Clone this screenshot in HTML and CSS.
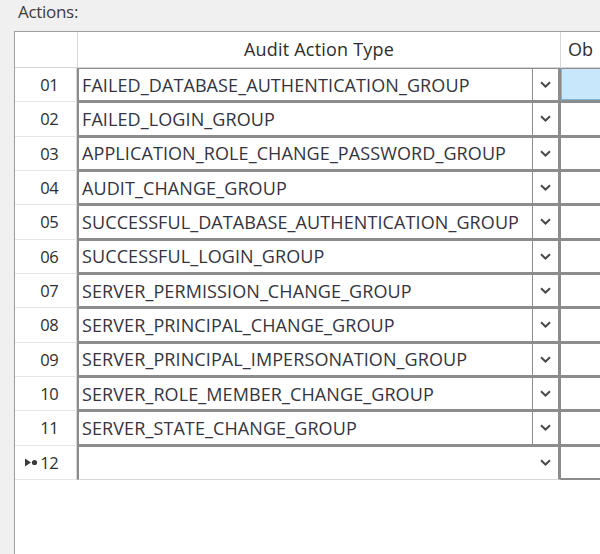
FILE: index.html
```html
<!DOCTYPE html>
<html>
<head>
<meta charset="utf-8">
<link rel="stylesheet" href="styles.css">
</head>
<body>
<div class="page">
  <div class="label">Actions:</div>
  <div class="grid">
    <div class="hdr">
      <div class="corner"></div>
      <div class="hcol">Audit Action Type</div>
      <div class="hob">Ob</div>
    </div>
    <div class="row first">
      <div class="rh">01</div>
      <div class="combo"><span class="txt">FAILED_DATABASE_AUTHENTICATION_GROUP</span><span class="arr"><svg width="11" height="7" viewBox="0 0 11 7"><path d="M1 1.2 L5.5 5.5 L10 1.2" fill="none" stroke="#4a4a4a" stroke-width="2"/></svg></span></div>
      <div class="cell sel"></div>
    </div>
    <div class="row">
      <div class="rh">02</div>
      <div class="combo"><span class="txt">FAILED_LOGIN_GROUP</span><span class="arr"><svg width="11" height="7" viewBox="0 0 11 7"><path d="M1 1.2 L5.5 5.5 L10 1.2" fill="none" stroke="#4a4a4a" stroke-width="2"/></svg></span></div>
      <div class="cell"></div>
    </div>
    <div class="row">
      <div class="rh">03</div>
      <div class="combo"><span class="txt">APPLICATION_ROLE_CHANGE_PASSWORD_GROUP</span><span class="arr"><svg width="11" height="7" viewBox="0 0 11 7"><path d="M1 1.2 L5.5 5.5 L10 1.2" fill="none" stroke="#4a4a4a" stroke-width="2"/></svg></span></div>
      <div class="cell"></div>
    </div>
    <div class="row">
      <div class="rh">04</div>
      <div class="combo"><span class="txt">AUDIT_CHANGE_GROUP</span><span class="arr"><svg width="11" height="7" viewBox="0 0 11 7"><path d="M1 1.2 L5.5 5.5 L10 1.2" fill="none" stroke="#4a4a4a" stroke-width="2"/></svg></span></div>
      <div class="cell"></div>
    </div>
    <div class="row">
      <div class="rh">05</div>
      <div class="combo"><span class="txt">SUCCESSFUL_DATABASE_AUTHENTICATION_GROUP</span><span class="arr"><svg width="11" height="7" viewBox="0 0 11 7"><path d="M1 1.2 L5.5 5.5 L10 1.2" fill="none" stroke="#4a4a4a" stroke-width="2"/></svg></span></div>
      <div class="cell"></div>
    </div>
    <div class="row">
      <div class="rh">06</div>
      <div class="combo"><span class="txt">SUCCESSFUL_LOGIN_GROUP</span><span class="arr"><svg width="11" height="7" viewBox="0 0 11 7"><path d="M1 1.2 L5.5 5.5 L10 1.2" fill="none" stroke="#4a4a4a" stroke-width="2"/></svg></span></div>
      <div class="cell"></div>
    </div>
    <div class="row">
      <div class="rh">07</div>
      <div class="combo"><span class="txt">SERVER_PERMISSION_CHANGE_GROUP</span><span class="arr"><svg width="11" height="7" viewBox="0 0 11 7"><path d="M1 1.2 L5.5 5.5 L10 1.2" fill="none" stroke="#4a4a4a" stroke-width="2"/></svg></span></div>
      <div class="cell"></div>
    </div>
    <div class="row">
      <div class="rh">08</div>
      <div class="combo"><span class="txt">SERVER_PRINCIPAL_CHANGE_GROUP</span><span class="arr"><svg width="11" height="7" viewBox="0 0 11 7"><path d="M1 1.2 L5.5 5.5 L10 1.2" fill="none" stroke="#4a4a4a" stroke-width="2"/></svg></span></div>
      <div class="cell"></div>
    </div>
    <div class="row">
      <div class="rh">09</div>
      <div class="combo"><span class="txt">SERVER_PRINCIPAL_IMPERSONATION_GROUP</span><span class="arr"><svg width="11" height="7" viewBox="0 0 11 7"><path d="M1 1.2 L5.5 5.5 L10 1.2" fill="none" stroke="#4a4a4a" stroke-width="2"/></svg></span></div>
      <div class="cell"></div>
    </div>
    <div class="row">
      <div class="rh">10</div>
      <div class="combo"><span class="txt">SERVER_ROLE_MEMBER_CHANGE_GROUP</span><span class="arr"><svg width="11" height="7" viewBox="0 0 11 7"><path d="M1 1.2 L5.5 5.5 L10 1.2" fill="none" stroke="#4a4a4a" stroke-width="2"/></svg></span></div>
      <div class="cell"></div>
    </div>
    <div class="row">
      <div class="rh">11</div>
      <div class="combo"><span class="txt">SERVER_STATE_CHANGE_GROUP</span><span class="arr"><svg width="11" height="7" viewBox="0 0 11 7"><path d="M1 1.2 L5.5 5.5 L10 1.2" fill="none" stroke="#4a4a4a" stroke-width="2"/></svg></span></div>
      <div class="cell"></div>
    </div>
    <div class="row new">
      <div class="rh"><span class="marker"><svg width="13" height="9" viewBox="0 0 13 9"><path d="M0 0.5 L6 4.5 L0 8.5 Z" fill="#3c3c3c"/><circle cx="9.5" cy="4.5" r="2.6" fill="#3c3c3c"/></svg></span>12</div>
      <div class="combo"><span class="txt"></span><span class="arr"><svg width="11" height="7" viewBox="0 0 11 7"><path d="M1 1.2 L5.5 5.5 L10 1.2" fill="none" stroke="#4a4a4a" stroke-width="2"/></svg></span></div>
      <div class="cell"></div>
    </div>
  </div>
</div>
</body>
</html>
```

FILE: styles.css
```css
html, body {
  margin: 0;
  padding: 0;
}
body {
  background: #f0f0f0;
  font-family: "Open Sans", "Noto Sans", sans-serif;
  color: #333333;
}
.page {
  width: 600px;
  height: 554px;
  overflow: hidden;
}
.label {
  height: 31px;
  padding-left: 18px;
  font-size: 17px;
  line-height: 23px;
  color: #3c3c3c;
  letter-spacing: -0.3px;
}
.grid {
  margin-left: 14px;
  width: 640px;
  height: 530px;
  background: #ffffff;
  border-left: 1px solid #a0a0a0;
  border-top: 1px solid #a0a0a0;
}
.hdr {
  display: flex;
  height: 35px;
  border-bottom: 1px solid #d6d6d6;
  font-size: 18px;
  line-height: 35px;
  color: #2e2e2e;
}
.corner {
  width: 62px;
  border-right: 1px solid #d6d6d6;
}
.hcol {
  width: 482px;
  border-right: 1px solid #d6d6d6;
  text-align: center;
  letter-spacing: 0.2px;
}
.hob {
  padding-left: 7px;
}
.row {
  display: flex;
  height: 34.33px;
  font-size: 18px;
  color: #343440;
}
.rh {
  width: 62px;
  box-sizing: border-box;
  border-right: 1px solid #d6d6d6;
  border-bottom: 1px solid #e6e6e6;
  padding-right: 18px;
  display: flex;
  align-items: center;
  justify-content: flex-end;
  font-size: 16.5px;
  letter-spacing: -0.6px;
  color: #2e2e2e;
}
.marker {
  display: inline-flex;
  align-items: center;
  margin-right: 2px;
}
.combo {
  width: 484px;
  box-sizing: border-box;
  display: flex;
  border-left: 2px solid #8c8c8c;
  border-right: 3px solid #8c8c8c;
  border-top: 1px solid #8c8c8c;
  border-bottom: 2px solid #8c8c8c;
}
.txt {
  width: 454px;
  box-sizing: border-box;
  border-right: 1px solid #8c8c8c;
  padding-left: 3px;
  display: flex;
  align-items: center;
  white-space: nowrap;
  letter-spacing: 0.1px;
}
.arr {
  flex: 1;
  display: flex;
  align-items: center;
  justify-content: center;
}
.cell {
  flex: 1;
  box-sizing: border-box;
  border-top: 1px solid #8c8c8c;
  border-bottom: 2px solid #8c8c8c;
}
.cell.sel {
  background: #c9e7fb;
  border-left: 1px solid #7fb6dc;
  box-shadow: inset 0 -1px 0 #7fb6dc;
}
.row.new .txt {
  border-right: none;
}
.row.new .combo {
  border-bottom: 1px solid #d6d6d6;
}
```
